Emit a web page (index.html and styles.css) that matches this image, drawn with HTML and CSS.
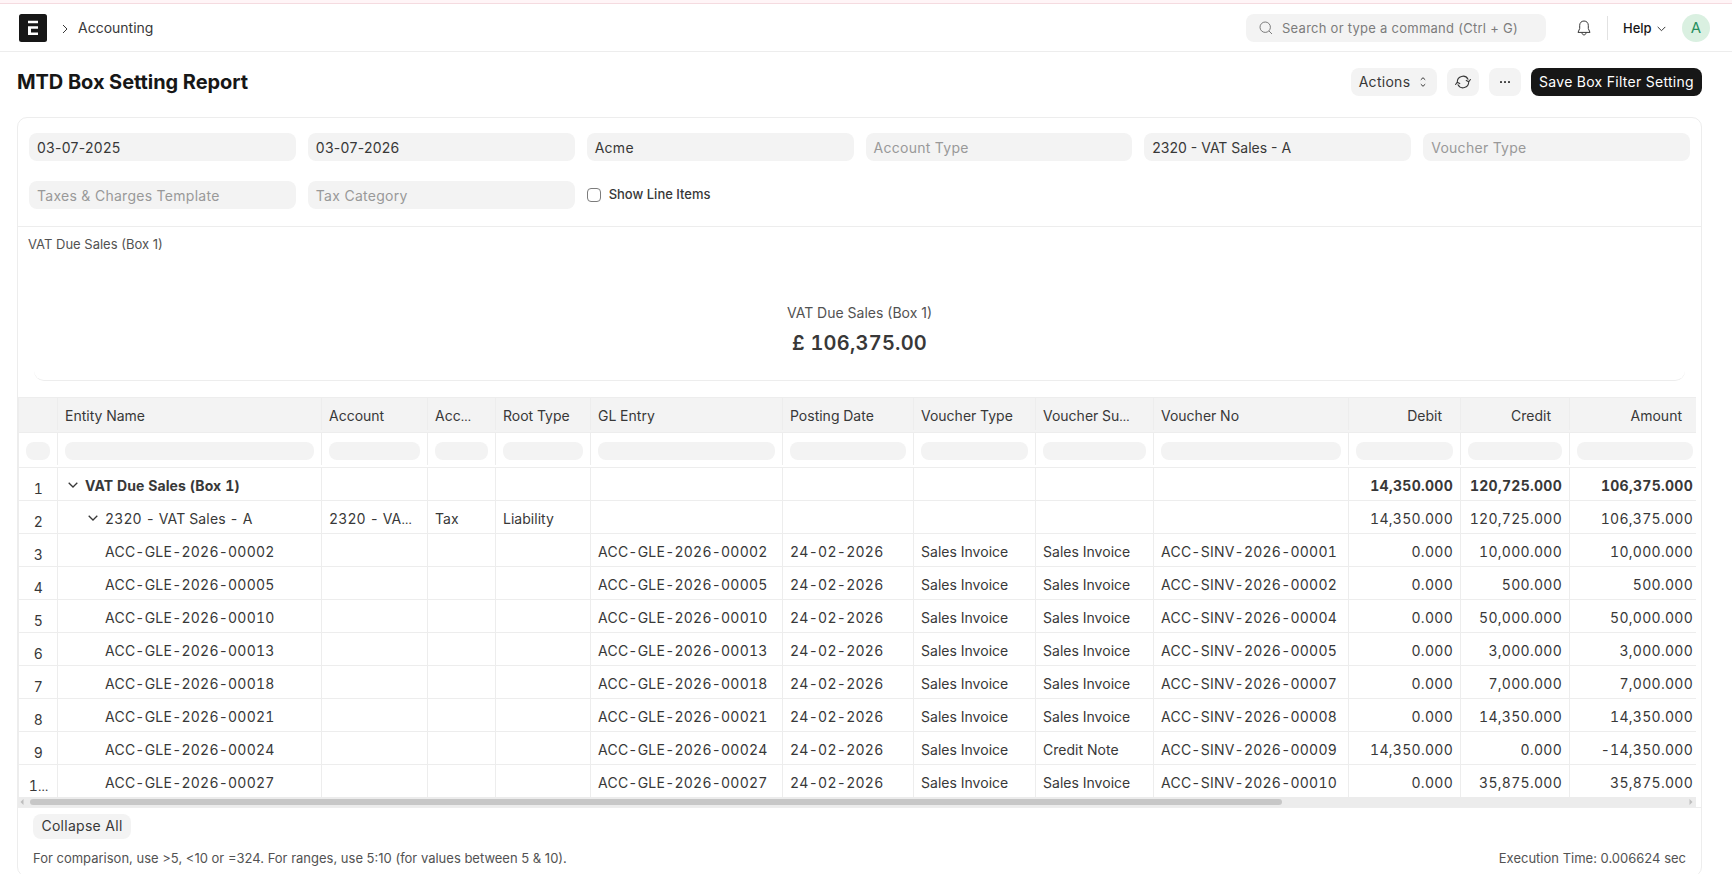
FILE: index.html
```html
<!DOCTYPE html>
<html lang="en">
<head>
<meta charset="utf-8">
<title>MTD Box Setting Report</title>
<link rel="stylesheet" href="styles.css">
</head>
<body>
<div class="strip"></div>
<header class="navbar">
  <svg class="logo" width="28" height="28" viewBox="0 0 28 28"><rect width="28" height="28" rx="2.5" fill="#171717"/><path d="M9 6.7h10v2.6H9zM9 12.2h10v2.6h-7v3.6h7V21H9z" fill="#fff"/></svg>
  <svg class="crumb" width="6" height="10" viewBox="0 0 6 10"><path d="M1 1l4 4-4 4" fill="none" stroke="#383838"/></svg>
  <span class="crumb-text">Accounting</span>
  <div class="search">
    <svg width="14" height="14" viewBox="0 0 14 14" fill="none" stroke="#7c7c7c"><circle cx="6.2" cy="6.2" r="5.2"/><path d="M10 10l3 3"/></svg>
    <span>Search or type a command (Ctrl + G)</span>
  </div>
  <svg class="bell" width="14" height="16" viewBox="0 0 14 16" fill="none" stroke="#383838"><path d="M7 1C4.300 1 2.700 3 2.700 5.300V8.500L1 12.400H13L11.300 8.500V5.300C11.300 3 9.700 1 7 1ZM5 12.700C5 14 5.800 14.900 7 14.900S9 14 9 12.700" stroke-linejoin="round"/></svg>
  <div class="divider"></div>
  <span class="help">Help</span>
  <svg class="help-caret" width="9" height="6" viewBox="0 0 9 6"><path d="M.7.9L4.500 4.700 8.300.9" fill="none" stroke="#383838"/></svg>
  <div class="avatar">A</div>
</header>
<div class="page-head">
  <h1>MTD Box Setting Report</h1>
  <div class="buttons">
    <div class="btn actions">Actions<svg width="6" height="10" viewBox="0 0 6 10" fill="none" stroke="#383838"><path d="M.8 2.800L3 .7l2.200 2.100M.8 7.200L3 9.300l2.200-2.100"/></svg></div>
    <div class="btn icon"><svg width="16" height="14" viewBox="0 0 16 14" fill="none" stroke="#383838" stroke-width="1.1" stroke-linecap="round" stroke-linejoin="round"><path d="M2.300 7.800V7A5.700 5.700 0 0 1 13 4.200M13.700 6.200V7A5.700 5.700 0 0 1 3 9.800M11.300 5.400l2.400 1.400 1.700-2.300M.6 9.500l1.700-2.300 2.400 1.400"/></svg></div>
    <div class="btn icon"><svg width="10" height="2" viewBox="0 0 10 2" fill="#383838"><rect width="2" height="2" rx=".4"/><rect x="4" width="2" height="2" rx=".4"/><rect x="8" width="2" height="2" rx=".4"/></svg></div>
    <div class="btn primary">Save Box Filter Setting</div>
  </div>
</div>
<main class="card">
  <section class="filters">
    <div class="field">03-07-2025</div>
    <div class="field">03-07-2026</div>
    <div class="field">Acme</div>
    <div class="field empty">Account Type</div>
    <div class="field tight">2320 - VAT Sales - A</div>
    <div class="field empty">Voucher Type</div>
    <div class="field empty">Taxes &amp; Charges Template</div>
    <div class="field empty">Tax Category</div>
    <div class="check"><i></i>Show Line Items</div>
  </section>
  <p class="message">VAT Due Sales (Box 1)</p>
  <section class="summary">
    <div class="summary-label">VAT Due Sales (Box 1)</div>
    <div class="summary-value">£ 106,375.00</div>
  </section>
  <section class="table" id="table"></section>
  <div class="scrollbar">
    <svg width="4" height="6" viewBox="0 0 4 6"><path d="M3.500 0v6L.5 3z" fill="#bdbdbd"/></svg>
    <div class="track"><div class="thumb"></div></div>
    <svg width="4" height="6" viewBox="0 0 4 6"><path d="M.5 0v6l3-3z" fill="#bdbdbd"/></svg>
  </div>
  <footer>
    <div class="collapse">Collapse All</div>
    <div class="foot-line"><span>For comparison, use &gt;5, &lt;10 or =324. For ranges, use 5:10 (for values between 5 &amp; 10).</span><span>Execution Time: 0.006624 sec</span></div>
  </footer>
</main>
<script src="table.js"></script>
</body>
</html>
```
FILE: styles.css
```css
* { box-sizing: border-box; }
body { margin: 0; height: 874px; overflow: hidden; background: #fff; color: #383838; font: 420 14px/1.5 Inter, "Liberation Sans", sans-serif; letter-spacing: 0.02em; }
svg { display: block; flex: none; }
.strip { height: 4px; background: #fff5f7; border-bottom: 1px solid #f5dbe0; }
.navbar { display: flex; align-items: center; height: 48px; padding: 0 22px 0 19px; border-bottom: 1px solid #ededed; }
.crumb { margin: 2px 10px 0 15px; }
.crumb-text { letter-spacing: 0; }
.search { display: flex; align-items: center; gap: 9px; width: 300px; height: 28px; margin-left: auto; padding-left: 13px; border-radius: 8px; background: #f3f3f3; color: #7c7c7c; font-size: 13px; letter-spacing: 0.02em; }
.search span { padding-top: 2px; }
.bell { margin-left: 31px; }
.divider { width: 1px; height: 24px; margin: 0 15px 0 16px; background: #e2e2e2; }
.help { width: 29px; padding-top: 2px; color: #171717; font-size: 13px; font-weight: 460; letter-spacing: 0; }
.help-caret { margin: 2px 16px 0 5px; }
.avatar { width: 28px; height: 28px; border-radius: 50%; background: #daf0e1; color: #278f5e; text-align: center; font-size: 15px; line-height: 28px; }
.page-head { display: flex; align-items: center; justify-content: space-between; height: 60px; padding: 0 30px 0 17px; }
h1 { margin: 0; color: #171717; font-size: 20px; font-weight: 700; letter-spacing: -0.003em; }
.buttons { display: flex; gap: 10px; }
.btn { display: flex; align-items: center; justify-content: center; height: 28px; border-radius: 8px; background: #f3f3f3; line-height: 26px; white-space: nowrap; }
.actions { width: 86px; gap: 10px; padding-right: 3px; padding-bottom: 1px; }
.icon { width: 32px; }
.primary { width: 171px; padding-bottom: 1px; background: #171717; color: #fff; }
.card { width: 1685px; height: 760px; margin: 5px 0 0 17px; border: 1px solid #ededed; border-radius: 10px; }
.filters { display: grid; grid-template-columns: repeat(6, 1fr); column-gap: 12px; row-gap: 20px; height: 109px; padding: 15px 11px 0; border-bottom: 1px solid #ededed; align-content: start; }
.field { height: 28px; padding-left: 8px; border-radius: 8px; background: #f3f3f3; line-height: 29px; }
.empty { color: #999; }
.tight { letter-spacing: 0; }
.check { display: flex; align-items: center; gap: 8px; height: 28px; font-size: 13px; font-weight: 500; letter-spacing: 0; }
.check i { width: 14px; height: 14px; border: 1px solid #7c7c7c; border-radius: 4px; }
.message { margin: 0; padding: 7px 10px 0; height: 43px; font-size: 13px; line-height: 20px; letter-spacing: 0; color: #525252; }
.summary { height: 111px; margin: 0 16px 16px; padding-top: 32px; border-bottom: 1px solid #ededed; border-radius: 10px; text-align: center; }
.summary-label { height: 22px; line-height: 22px; color: #525252; letter-spacing: 0; }
.summary-value { margin-top: 6px; font-size: 20px; line-height: 26px; font-weight: 600; letter-spacing: 0.012em; font-feature-settings: "tnum"; }
.table { width: 1678px; border-left: 1px solid #ededed; font-feature-settings: "tnum"; }
.row { display: grid; grid-template-columns: 39px 264px 106px 68px 95px 192px 131px 122px 118px 195px 112px 109px 127px; height: 33px; border-bottom: 1px solid #ededed; }
.cell { display: flex; align-items: center; min-width: 0; padding: 0 7px; border-right: 1px solid #ededed; }
.cell:last-child { border-right: 0; padding-right: 4px; }
.cell span { white-space: nowrap; }
.cell svg { margin-right: 7px; }
.dots { font-size: 12px; letter-spacing: 0; }
.num { justify-content: flex-end; }
.head { height: 36px; border-top: 1px solid #ededed; background: #f3f3f3; }
.head .cell { height: 32px; padding-top: 2px; letter-spacing: 0; }
.head .num { padding-right: 18px; }
.head .num:last-child { padding-right: 15px; }
.pads { height: 35px; }
.pads .cell { height: 32px; padding-top: 4px; }
.pad { width: 100%; height: 18px; border-radius: 8px; background: #f3f3f3; }
.body .cell { padding-top: 2px; }
.row:last-child { height: 32px; border-bottom: 0; }
.row:last-child .cell { padding-top: 3px; }
.body .index, .row:last-child .index { justify-content: center; padding: 9px 4px 0 5px; }
.body .text { letter-spacing: 0.002em; }
.body .code { letter-spacing: 0.017em; }
.body .date { letter-spacing: 0.02em; }
.body .account { letter-spacing: 0.009em; }
.total { font-weight: 700; }
.total .level0 { letter-spacing: 0.006em; }
.total .index { font-weight: 420; }
.level0 { padding-left: 10px; }
.level1 { padding-left: 30px; }
.level2 { padding-left: 47px; }
.scrollbar { display: flex; align-items: center; gap: 8px; width: 1678px; height: 10px; padding: 0 3px 0 2px; background: #ececec; }
.scrollbar .track { flex: 1; margin-left: -2px; }
.thumb { width: 1252px; height: 6px; border-radius: 3px; background: #c7c7c7; }
footer { padding: 6px 15px 0; border-top: 1px solid #ededed; }
.collapse { width: 98px; height: 25px; border-radius: 8px; background: #f3f3f3; text-align: center; line-height: 24px; }
.foot-line { display: flex; justify-content: space-between; margin-top: 9px; color: #525252; font-size: 13px; line-height: 20px; letter-spacing: 0; }
```
FILE: table.js
```js
const columns = ['', 'Entity Name', 'Account', 'Acc…', 'Root Type', 'GL Entry', 'Posting Date', 'Voucher Type', 'Voucher Su…', 'Voucher No', 'Debit', 'Credit', 'Amount'];
const entries = [
  ['00002', 'Sales Invoice', '00001', '0.000', '10,000.000', '10,000.000'],
  ['00005', 'Sales Invoice', '00002', '0.000', '500.000', '500.000'],
  ['00010', 'Sales Invoice', '00004', '0.000', '50,000.000', '50,000.000'],
  ['00013', 'Sales Invoice', '00005', '0.000', '3,000.000', '3,000.000'],
  ['00018', 'Sales Invoice', '00007', '0.000', '7,000.000', '7,000.000'],
  ['00021', 'Sales Invoice', '00008', '0.000', '14,350.000', '14,350.000'],
  ['00024', 'Credit Note', '00009', '14,350.000', '0.000', '-14,350.000'],
  ['00027', 'Sales Invoice', '00010', '0.000', '35,875.000', '35,875.000']
];
const rows = [
  ['VAT Due Sales (Box 1)', '', '', '', '', '', '', '', '', '14,350.000', '120,725.000', '106,375.000'],
  ['2320 - VAT Sales - A', '2320 - VA…', 'Tax', 'Liability', '', '', '', '', '', '14,350.000', '120,725.000', '106,375.000'],
  ...entries.map(([id, subtype, voucher, ...amounts]) => [
    `ACC-GLE-2026-${id}`, '', '', '', `ACC-GLE-2026-${id}`, '24-02-2026', 'Sales Invoice', subtype, `ACC-SINV-2026-${voucher}`, ...amounts
  ])
];
const caret = '<svg width="10" height="6" viewBox="0 0 10 6"><path d="M.7.8L5 5 9.300.8" fill="none" stroke="#383838" stroke-width="1.3"/></svg>';
const cell = (content, classes) => `<div class="cell ${classes}">${content}</div>`;
const label = (text) => `<span>${String(text).replace('…', '<span class="dots">…</span>')}</span>`;

function kindOf(value, column) {
  if (column > 8) return 'num';
  if (column === 5) return 'date';
  if (value.startsWith('2320')) return 'account';
  return /\d/.test(value) ? 'code' : 'text';
}

let html = '<div class="row head">' + columns.map((c, i) => cell(label(c), i > 9 ? 'num' : '')).join('') + '</div>';
html += '<div class="row pads">' + columns.map(() => cell('<div class="pad"></div>', '')).join('') + '</div>';
rows.forEach((row, r) => {
  const level = Math.min(r, 2);
  html += `<div class="row body ${r === 0 ? 'total' : ''}">` + cell(label(r < 9 ? r + 1 : '1…'), 'index');
  html += row.map((value, i) =>
    cell((i === 0 && level < 2 ? caret : '') + label(value), kindOf(value, i) + (i === 0 ? ` level${level}` : ''))
  ).join('') + '</div>';
});
document.getElementById('table').innerHTML = html;
```
